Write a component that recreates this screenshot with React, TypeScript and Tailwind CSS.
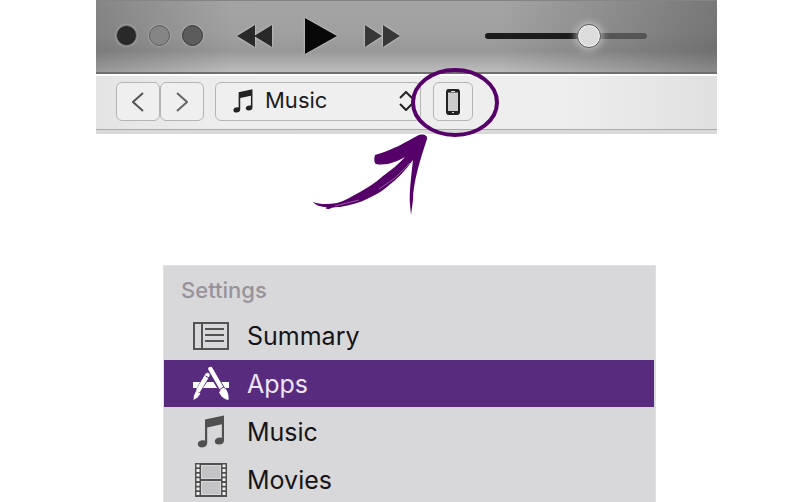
import { useState } from "react";
import type { ReactNode } from "react";

function NoteIcon({ className }: { className: string }) {
  return (
    <svg viewBox="0 0 28 33" className={className} fill="currentColor" aria-hidden="true">
      <path d="M8 4.5 27 0.5V25.5C27 28 25 29.6 22 29.6 19.5 29.6 17.8 28.5 17.8 26.6 17.8 24.2 20.2 22.6 23 22.6L24.9 22.8V9.2L10.2 12.4V27.8C10.2 30.6 8 32.4 5 32.4 2.4 32.4 0.8 31.2 0.8 29.2 0.8 26.8 3 25.2 6 25.2L8 25.4Z" />
    </svg>
  );
}

function SummaryIcon() {
  return (
    <svg viewBox="0 0 36 28" className="h-7 w-9" fill="none" stroke="#535353" strokeWidth="2" aria-hidden="true">
      <path d="M1 1H35V27H1ZM9 1V27" />
      <path d="M12 7H31M12 13H31M12 19H31" />
    </svg>
  );
}

function AppsIcon() {
  return (
    <svg viewBox="0 0 36 36" className="size-9" aria-hidden="true">
      <path d="M0 16H36V22H0Z" fill="#fff" />
      <path d="M15 9 5 27M17 4 31 27" fill="none" stroke="#582b7f" strokeWidth="7" />
      <path d="M14 16H20L24 22H10Z" fill="#fff" />
      <path d="M17 11.500 20 16H14.500Z" fill="#582b7f" />
      <g fill="none" stroke="#fff" strokeLinecap="round">
        <path d="M14.500 9 5.500 24" strokeWidth="4.500" />
        <path d="M17.500 3 29 23" strokeWidth="4.500" />
      </g>
      <path d="M3 25 7.500 27.500 4.500 31.500 0.500 34 1 29.500Z" fill="#fff" />
      <path d="M26 26 32 22C35 25.500 36 30 35.500 34 31 33.500 27.500 30 26 26Z" fill="#fff" />
      <path d="M12.500 10 17 12.500M25.500 24.500 31 20.500" stroke="#582b7f" strokeWidth="1" />
    </svg>
  );
}

function MoviesIcon() {
  return (
    <svg viewBox="0 0 32 34" className="h-[34px] w-8" aria-hidden="true">
      <path d="M0 0H32V34H0Z" fill="#4f4f4f" />
      <path d="M6 2H26V16H6ZM6 18H26V32H6Z" fill="#d8d8da" />
      <path d="M7 3H25V15H7ZM7 19H25V31H7Z" fill="#c4c4c6" />
      <path d="M3 1.500V33M29 1.500V33" stroke="#f0f0f0" strokeWidth="3" strokeDasharray="2.800 1.800" />
    </svg>
  );
}

const items: { name: string; icon: ReactNode }[] = [
  { name: "Summary", icon: <SummaryIcon /> },
  { name: "Apps", icon: <AppsIcon /> },
  { name: "Music", icon: <NoteIcon className="h-[33px] w-7 text-[#505050]" /> },
  { name: "Movies", icon: <MoviesIcon /> },
];

function Highlight() {
  return (
    <svg
      viewBox="0 0 190 150"
      className="pointer-events-none absolute -top-[16px] -left-[124px] z-10 h-[150px] w-[190px] max-w-none"
      aria-hidden="true"
    >
      <ellipse cx="146" cy="36.500" rx="42" ry="32.500" fill="none" stroke="#560069" strokeWidth="4" />
      <path
        d="M118 73C119 69 113 67 108 70 97 76 84 84 66 89 65 92 65 97 67 98 77 100 87 96 96 91 90 98 82 104 74 110 66 117 58 122 51 126 42 131 35 135 28 137 20 138 12 139 4 136 6 139 12 141 18 141 16 142 17 143 20 143 24 141 28 141 31 141 41 139 50 137 58 133 66 129 74 125 79 120 88 113 97 104 104 94 102 112 100 128 101 139L102 149 104 134C104 117 111 94 118 73Z"
        fill="#560069"
        stroke="#fff"
        strokeWidth="3"
        paintOrder="stroke"
        strokeLinejoin="round"
      />
      <path d="M101 97 86 112 70 123M50 134 26 140" fill="none" stroke="#fff" strokeWidth="0.600" opacity="0.600" />
    </svg>
  );
}

const box = "h-[39px] rounded-md border border-[#b4b4b4] bg-[#efefef]";

export default function App() {
  const [volume, setVolume] = useState(67);
  const [active, setActive] = useState("Apps");
  return (
    <main className="h-screen overflow-hidden bg-white font-['Inter',sans-serif]">
      <section className="mr-[84px] ml-24">
        <header className="flex h-[74px] items-start border-t border-b-2 border-t-[#858585] border-b-[#6f6f6f] bg-[linear-gradient(90deg,#00000030,#00000000_22%,#00000000_65%,#00000045),linear-gradient(180deg,#a4a4a4,#a0a0a0_45%,#989898_70%,#bcbcbc)] pl-5">
          <div className="mt-6 flex gap-3">
            <button aria-label="Close" className="size-[21px] rounded-full border border-[#777] bg-[#292929] shadow-[0_0_2px_#ccc]" />
            <button aria-label="Minimise" className="size-[21px] rounded-full border border-[#555] bg-[#858585] shadow-[0_0_2px_#ccc]" />
            <button aria-label="Zoom" className="size-[21px] rounded-full border border-[#333] bg-[#5c5c5c] shadow-[0_0_2px_#ccc]" />
          </div>
          <div className="mt-[15px] ml-[34px] flex h-10 items-center">
            <button aria-label="Previous">
              <svg viewBox="0 0 36 22" className="h-[22px] w-9 drop-shadow-[0_0_1px_#ddd]" fill="#292929">
                <path d="M0 11 18 0V22ZM17 11 35 0V22Z" />
              </svg>
            </button>
            <button aria-label="Play" className="ml-8">
              <svg viewBox="0 0 32 36" className="h-9 w-8 drop-shadow-[0_0_1px_#ddd]" fill="#080808">
                <path d="M0 0 32 18 0 36Z" />
              </svg>
            </button>
            <button aria-label="Next" className="ml-7">
              <svg viewBox="0 0 36 22" className="h-[22px] w-9 drop-shadow-[0_0_1px_#ddd]" fill="#373737">
                <path d="M0 0 17 11 0 22ZM18 0 35 11 18 22Z" />
              </svg>
            </button>
          </div>
          <input
            type="range"
            aria-label="Volume"
            value={volume}
            onChange={(e) => setVolume(Number(e.target.value))}
            className="mt-[23px] ml-[84px] h-6 w-[162px] appearance-none bg-transparent [&::-webkit-slider-runnable-track]:h-1.5 [&::-webkit-slider-runnable-track]:rounded-full [&::-webkit-slider-runnable-track]:bg-[linear-gradient(90deg,#1c1c1c_65%,#555_65%)] [&::-webkit-slider-thumb]:-mt-[9px] [&::-webkit-slider-thumb]:size-6 [&::-webkit-slider-thumb]:appearance-none [&::-webkit-slider-thumb]:rounded-full [&::-webkit-slider-thumb]:border [&::-webkit-slider-thumb]:border-[#555] [&::-webkit-slider-thumb]:bg-[#dcdcdc] [&::-webkit-slider-thumb]:shadow-[inset_0_0_0_1px_#f4f4f4,0_0_8px_#ddd]"
          />
        </header>
        <nav className="flex h-[60px] items-start border-t-2 border-white bg-[linear-gradient(90deg,#e4e4e4,#ededed_20%,#eeeeee_75%,#e0e0e0)] pt-1.5 pl-5">
          <button aria-label="Back" className={`${box} flex w-11 items-center justify-center`}>
            <svg viewBox="0 0 12 20" className="h-5 w-3" fill="none" stroke="#555" strokeWidth="2">
              <path d="M11 1 1 10 11 19" />
            </svg>
          </button>
          <button aria-label="Forward" className={`${box} flex w-11 items-center justify-center`}>
            <svg viewBox="0 0 12 20" className="h-5 w-3" fill="none" stroke="#666" strokeWidth="2">
              <path d="M1 1 11 10 1 19" />
            </svg>
          </button>
          <div className="relative ml-[11px]">
            <NoteIcon className="pointer-events-none absolute top-[7px] left-[17px] h-6 w-[22px] text-[#222]" />
            <select aria-label="Library" className={`${box} w-[206px] appearance-none pr-6 pb-0.5 pl-[49px] text-[22px] text-[#1c1c1c]`}>
              <option>Music</option>
              <option>Movies</option>
            </select>
            <svg
              viewBox="0 0 14 20"
              className="pointer-events-none absolute top-[9px] right-2 h-5 w-3.5"
              fill="none"
              stroke="#222"
              strokeWidth="2"
              aria-hidden="true"
            >
              <path d="M1 7 7 1 13 7M1 13 7 19 13 13" />
            </svg>
          </div>
          <div className="relative ml-3">
            <button aria-label="Device" className={`${box} flex w-10 items-center justify-center`}>
              <svg viewBox="0 0 14 26" className="h-[26px] w-3.5">
                <rect x="1" y="1" width="12" height="24" rx="2" fill="#ccc" stroke="#222" strokeWidth="2" />
                <path d="M1 2H13M1 23.500H13" stroke="#222" strokeWidth="3" />
                <path d="M5 2.500H9M6 23.500H8" stroke="#ddd" />
              </svg>
            </button>
            <Highlight />
          </div>
        </nav>
        <div className="-mt-[5px] h-[5px] border-t border-[#aaa] bg-[#d9d9d9]" />
      </section>

      <section className="mt-[131px] mr-[145px] ml-[163px] border border-[#e1dfe1] bg-[#d8d7d9]">
        <h2 className="flex h-[46px] items-center pt-0.5 pl-[17px] text-[22px] font-medium text-[#98929a]">Settings</h2>
        <ul className="pr-px">
          {items.map((item) => (
            <li key={item.name}>
              <button
                onClick={() => setActive(item.name)}
                aria-current={active === item.name}
                className={`flex h-12 w-full items-center border-b border-b-[#d8d7d9] pl-7 text-left text-[25px] ${
                  active === item.name ? "bg-[#582b7f] text-[#eee5f5]" : "text-[#171417]"
                }`}
              >
                <span className="flex w-[38px] justify-center">{item.icon}</span>
                <span className="ml-[17px] pt-0.5">{item.name}</span>
              </button>
            </li>
          ))}
        </ul>
      </section>
    </main>
  );
}
